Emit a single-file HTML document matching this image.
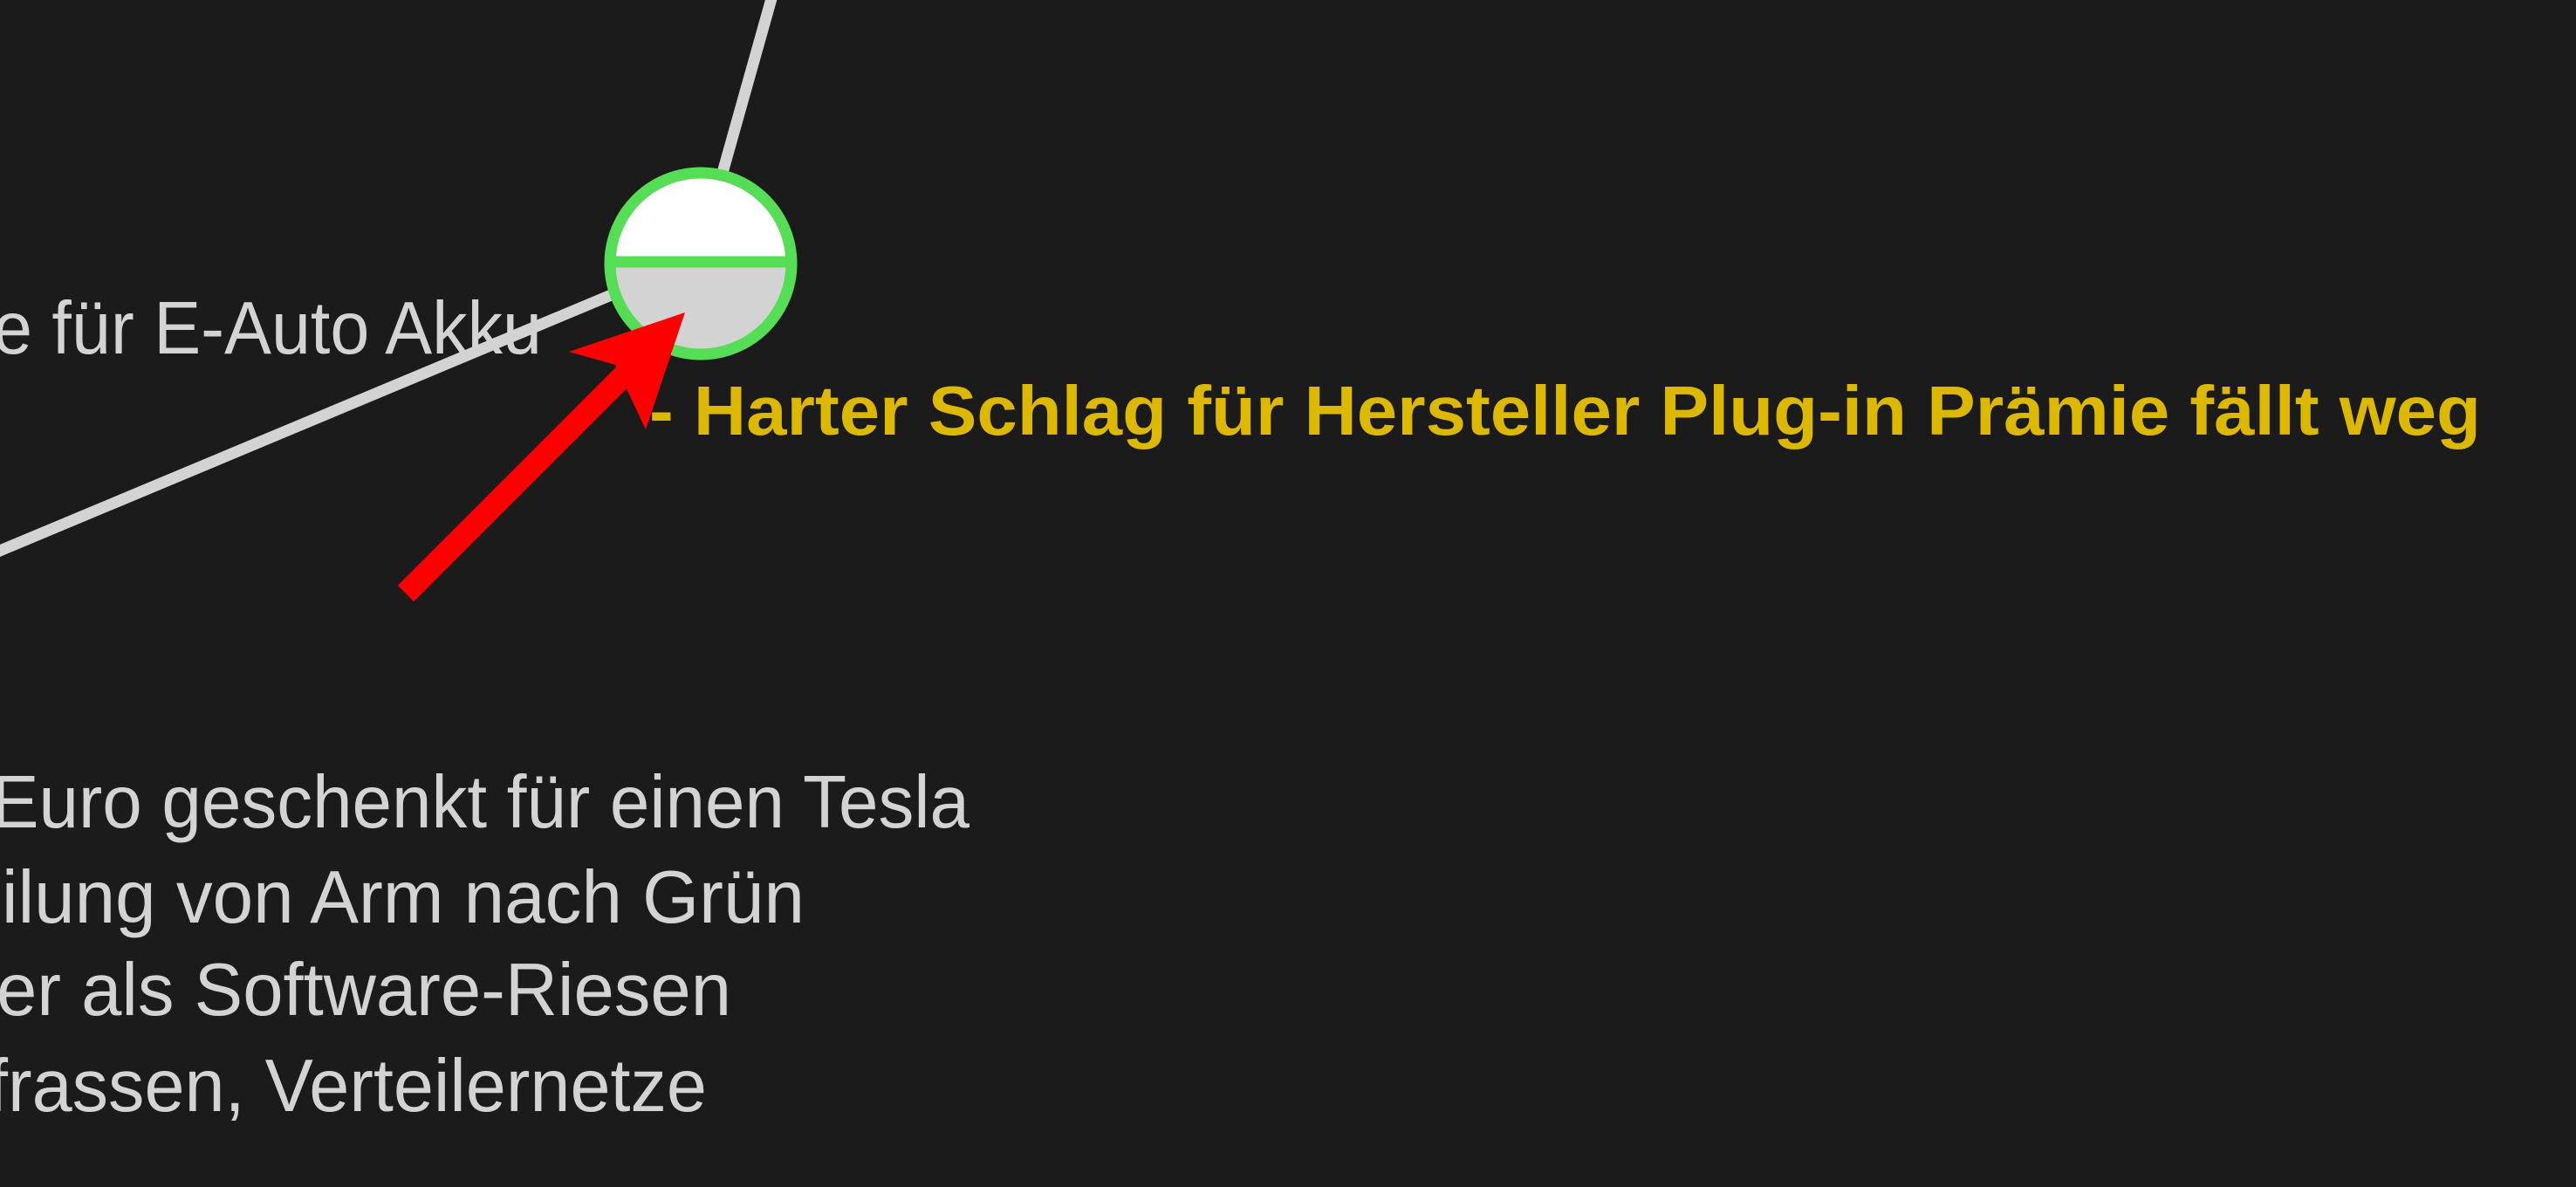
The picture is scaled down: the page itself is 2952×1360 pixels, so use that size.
<!DOCTYPE html>
<html><head><meta charset="utf-8"><style>
html,body{margin:0;padding:0;background:#1b1b1b;width:2952px;height:1360px;overflow:hidden}
svg{display:block}
text{font-family:"Liberation Sans",Arial,sans-serif}
</style></head><body>
<svg width="2952" height="1360" viewBox="0 0 2952 1360" xmlns="http://www.w3.org/2000/svg">
<rect width="2952" height="1360" fill="#1b1b1b"/>
<line x1="885" y1="-5" x2="826" y2="205" stroke="#d3d3d3" stroke-width="13"/>
<line x1="-5" y1="633" x2="710" y2="334" stroke="#d3d3d3" stroke-width="13"/>
<g fill="#d3d3d3" font-size="85">
<text x="-8" y="405" textLength="629" lengthAdjust="spacingAndGlyphs">e für E-Auto Akku</text>
<text x="-10" y="948" textLength="1121" lengthAdjust="spacingAndGlyphs">Euro geschenkt für einen Tesla</text>
<text x="2" y="1057" textLength="920" lengthAdjust="spacingAndGlyphs">ilung von Arm nach Grün</text>
<text x="-4" y="1163" textLength="842" lengthAdjust="spacingAndGlyphs">er als Software-Riesen</text>
<text x="-14" y="1273" textLength="824" lengthAdjust="spacingAndGlyphs">frassen, Verteilernetze</text>
</g>
<path d="M697 302 A106 106 0 0 1 909 302 Z" fill="#ffffff"/>
<path d="M697 302 A106 106 0 0 0 909 302 Z" fill="#d3d3d3"/>
<circle cx="803" cy="302" r="104" fill="none" stroke="#55dd55" stroke-width="13"/>
<line x1="697" y1="300" x2="909" y2="300" stroke="#55dd55" stroke-width="13"/>
<text x="744" y="498" fill="#dcb800" font-size="80" font-weight="bold" textLength="2099" lengthAdjust="spacingAndGlyphs">- Harter Schlag für Hersteller Plug-in Prämie fällt weg</text>
<line x1="465" y1="680" x2="735" y2="410" stroke="#ff0000" stroke-width="26"/>
<polygon points="785,358 652,403 705,418 740,492" fill="#ff0000"/>
</svg>
</body></html>
